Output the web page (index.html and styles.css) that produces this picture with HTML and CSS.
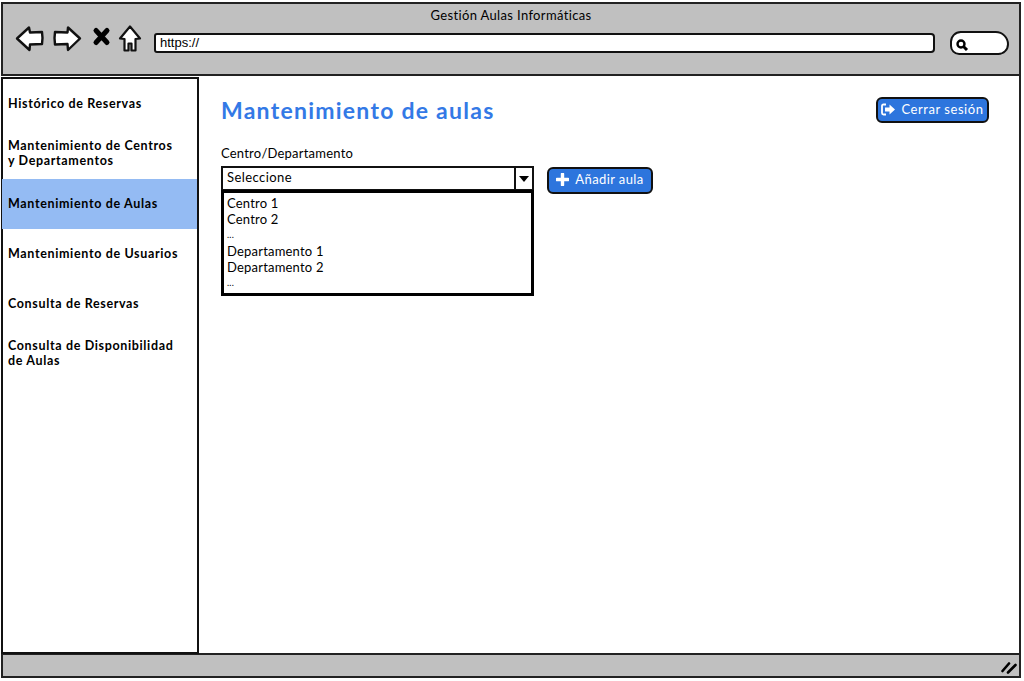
FILE: index.html
```html
<!DOCTYPE html>
<html lang="es">
<head>
<meta charset="utf-8">
<title>Gestión Aulas Informáticas</title>
<link rel="stylesheet" href="styles.css">
</head>
<body>
<div class="window">
  <header class="chrome">
    <div class="chrome-title">Gestión Aulas Informáticas</div>
    <div class="toolbar">
      <svg class="nav-icons" width="140" height="30" viewBox="0 0 140 30">
        <path d="M2 15.500 L14 4.500 L15 9.500 L27 9 Q28 15 27 21 L15 21.500 L14.500 27 Z" fill="#fff" stroke="#111" stroke-width="2.400" stroke-linejoin="round"/>
        <path d="M65 15.500 L53 4.500 L52.500 9.500 L40 9 Q39 15 40 21.500 L52.500 21 L53 27 Z" fill="#fff" stroke="#111" stroke-width="2.400" stroke-linejoin="round"/>
        <path d="M81 7.500 L92 19.500 M92 7.500 L81 19.500" fill="none" stroke="#000" stroke-width="5" stroke-linecap="round"/>
        <path d="M115 3.500 L125 15.500 L120.500 16 L120.500 27.500 L116.500 27.500 L116.500 20.500 L113.500 20.500 L113.500 27.500 L109.500 27.500 L109.500 16 L105 15.500 Z" fill="#fff" stroke="#111" stroke-width="2.200" stroke-linejoin="round"/>
      </svg>
      <div class="url">https://</div>
      <div class="search">
        <svg width="14" height="14" viewBox="0 0 14 14"><circle cx="6" cy="6" r="3.500" fill="#fff" stroke="#000" stroke-width="2.400"/><path d="M8.500 8.500 L12 12" stroke="#000" stroke-width="3"/></svg>
      </div>
    </div>
  </header>
  <div class="content">
    <nav class="sidebar">
      <a class="nav-item">Histórico de Reservas</a>
      <a class="nav-item">Mantenimiento de Centros<br>y Departamentos</a>
      <a class="nav-item nav-active">Mantenimiento de Aulas</a>
      <a class="nav-item">Mantenimiento de Usuarios</a>
      <a class="nav-item">Consulta de Reservas</a>
      <a class="nav-item">Consulta de Disponibilidad<br>de Aulas</a>
    </nav>
    <main class="main">
      <div class="page-head">
        <h1 class="page-title">Mantenimiento de aulas</h1>
        <button class="btn btn-logout">
          <svg width="15" height="13" viewBox="0 0 15 13"><path d="M5 1.500 H2.500 Q1 1.500 1 3 V10 Q1 11.500 2.500 11.500 H5" fill="none" stroke="#fff" stroke-width="1.800"/><path d="M4 4.500 H8.500 V1.500 L14 6.500 L8.500 11.500 V8.500 H4 Z" fill="#fff"/></svg>
          <span>Cerrar sesión</span>
        </button>
      </div>
      <label class="field-label">Centro/Departamento</label>
      <div class="field-row">
        <div class="combo-wrap">
          <div class="combo">
            <span class="combo-value">Seleccione</span>
            <span class="combo-arrow"><svg width="10" height="6" viewBox="0 0 10 6"><path d="M0 0 H10 L5 6 Z" fill="#000"/></svg></span>
          </div>
          <ul class="dropdown">
            <li>Centro 1</li>
            <li>Centro 2</li>
            <li class="dots">...</li>
            <li>Departamento 1</li>
            <li>Departamento 2</li>
            <li class="dots">...</li>
          </ul>
        </div>
        <button class="btn btn-add">
          <svg width="13" height="13" viewBox="0 0 13 13"><path d="M6.500 1 V12 M1 6.500 H12" stroke="#fff" stroke-width="3.400" stroke-linecap="round"/></svg>
          <span>Añadir aula</span>
        </button>
      </div>
    </main>
  </div>
  <footer class="status">
    <svg width="16" height="13" viewBox="0 0 16 13"><path d="M1.500 10 L8 2.500 M7 11.500 L14.500 4" stroke="#000" stroke-width="2.600" stroke-linecap="round"/></svg>
  </footer>
</div>
</body>
</html>
```
FILE: styles.css
```css
* { box-sizing: border-box; }
html, body { margin: 0; height: 100%; background: #fff; overflow: hidden; }
body {
  font-family: "Lato", "Noto Sans", sans-serif;
  font-size: 13px;
  color: #000;
  padding: 2px 3px 2px 1px;
}
.window {
  height: 676px;
  display: flex;
  flex-direction: column;
}
.chrome {
  height: 74px;
  flex: none;
  background: #c0c0c0;
  border: 2px solid #222;
}
.chrome-title {
  text-align: center;
  line-height: 15px;
  margin-top: 4px;
  letter-spacing: 0.35px;
}
.toolbar {
  display: flex;
  align-items: flex-start;
  padding-left: 12px;
}
.nav-icons { flex: none; }
.url {
  flex: none;
  width: 781px;
  height: 20px;
  margin: 10px 0 0 -1px;
  background: #fff;
  border: 2.500px solid #111;
  border-radius: 3px 4px 4px 3px;
  padding-left: 4px;
  line-height: 15px;
  font-family: "Liberation Sans", sans-serif;
}
.search {
  flex: none;
  width: 59px;
  height: 24px;
  margin: 8px 0 0 15px;
  background: #fff;
  border: 2.500px solid #111;
  border-radius: 13px 16px 13px 11px;
  padding: 3px 0 0 3px;
  display: flex;
  align-items: center;
}
.content {
  flex: 1;
  display: flex;
  min-height: 0;
  border-right: 2px solid #222;
  padding-top: 1px;
}
.sidebar {
  width: 198px;
  flex: none;
  background: #fff;
  border: 2px solid #111;
  display: flex;
  flex-direction: column;
  margin-bottom: -1px;
  position: relative;
  z-index: 1;
}
.nav-item {
  display: flex;
  align-items: center;
  height: 50px;
  padding: 0 0 2px 6px;
  margin: 0 -1px;
  font-weight: 700;
  font-size: 12.500px;
  line-height: 15px;
  letter-spacing: 0.65px;
  color: #000;
}
.nav-active { background: #94bbf3; margin-right: 0; }
.main {
  flex: 1;
  padding: 18px 30px 0 22px;
  min-width: 0;
}
.page-head {
  display: flex;
  justify-content: space-between;
  align-items: flex-start;
  height: 50px;
}
.page-title {
  margin: 0;
  font-size: 23px;
  line-height: 30px;
  font-weight: 700;
  letter-spacing: 1.25px;
  color: #3379e6;
}
.btn {
  display: flex;
  align-items: center;
  justify-content: center;
  gap: 5px;
  background: #2d75dd;
  color: #fff;
  border: 2.500px solid #111;
  border-radius: 6px;
  font: inherit;
  letter-spacing: 0.55px;
  padding: 0 0 2px;
}
.btn-logout { width: 113px; height: 26px; margin-top: 2px; }
.btn-add {
  width: 106px;
  height: 27px;
  margin: 1px 0 0 13px;
  gap: 6px;
  letter-spacing: 0.4px;
  padding-bottom: 3px;
}
.field-label {
  display: block;
  line-height: 16px;
  letter-spacing: 0.22px;
}
.field-row {
  display: flex;
  align-items: flex-start;
  margin-top: 5px;
}
.combo-wrap { width: 313px; flex: none; }
.combo {
  height: 25px;
  display: flex;
  border: 2px solid #111;
  background: #fff;
  padding-left: 4px;
}
.combo-value { flex: 1; line-height: 18px; letter-spacing: 0.42px; }
.combo-arrow {
  width: 18px;
  border-left: 2px solid #111;
  display: flex;
  align-items: center;
  justify-content: center;
}
.dropdown {
  list-style: none;
  height: 106px;
  border: 3px solid #000;
  margin: -1px 0 0;
  padding: 2px 0 0 3px;
  background: #fff;
  letter-spacing: 0.2px;
}
.dropdown li { line-height: 16px; height: 16px; }
.dots { font-size: 9px; }
.status {
  height: 25px;
  flex: none;
  background: #c0c0c0;
  border: 2px solid #222;
  display: flex;
  align-items: center;
  justify-content: flex-end;
  padding: 4px 2px 0 0;
}
```
